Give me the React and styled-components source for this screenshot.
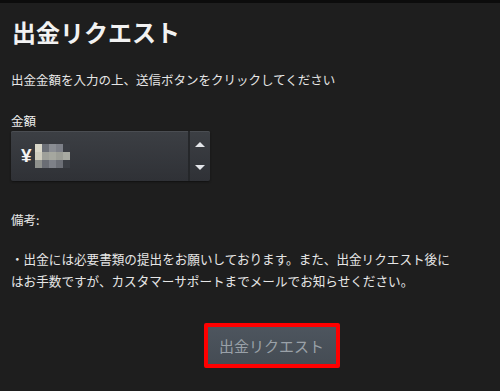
import React from "react";
import styled, { createGlobalStyle } from "styled-components";

const GlobalStyle = createGlobalStyle`
  html, body {
    margin: 0;
    padding: 0;
    background: #1e1e1e;
  }
  body {
    font-family: "Noto Sans CJK JP", "Noto Sans", sans-serif;
    color: #e8e8e8;
  }
`;

const Page = styled.div`
  width: 500px;
  height: 391px;
  background: #1e1e1e;
  border-top: 3px solid #0c0c0c;
  box-sizing: border-box;
  overflow: hidden;
`;

const Content = styled.div`
  padding: 0 10px 0 11px;
  display: flex;
  flex-direction: column;
`;

const Title = styled.h1`
  margin: 11px 0 0 1px;
  font-size: 24px;
  font-weight: 700;
  line-height: 36px;
  color: #f2f2f2;
`;

const Lead = styled.p`
  margin: 21px 0 0;
  font-size: 12.5px;
  line-height: 18px;
  color: #e6e6e6;
`;

const Label = styled.div`
  margin-top: 23px;
  font-size: 12.5px;
  line-height: 18px;
  color: #eeeeee;
`;

const AmountBox = styled.div`
  margin-top: 1px;
  width: 199px;
  height: 50px;
  display: flex;
  border-radius: 2px;
  background: linear-gradient(#3c3f44, #2f3136);
  box-shadow: inset 0 1px 0 #4a4d52, 0 1px 2px #111;
`;

const AmountField = styled.div`
  flex: 1;
  display: flex;
  align-items: center;
  padding-left: 10px;
  font-family: "Liberation Sans", sans-serif;
  font-size: 19px;
  font-weight: 700;
  color: #f4f4f4;
  border-right: 2px solid #25272a;
`;

const Mosaic = styled.div`
  display: grid;
  grid-template-columns: repeat(5, 7px);
  grid-template-rows: repeat(3, 8px);
  margin-left: 3px;
`;

const Cell = styled.span`
  background: ${(p) => p.$c};
`;

const Spinner = styled.div`
  width: 20px;
  display: flex;
  flex-direction: column;
  justify-content: space-between;
  align-items: center;
  padding: 11px 0;
`;

const Arrow = styled.span`
  width: 0;
  height: 0;
  border-left: 5px solid transparent;
  border-right: 5px solid transparent;
  ${(p) =>
    p.$up
      ? "border-bottom: 5px solid #e4e6ea;"
      : "border-top: 5px solid #e4e6ea;"}
`;

const Notes = styled.div`
  margin-top: 28px;
  font-size: 12.5px;
  line-height: 22px;
  color: #e6e6e6;
`;

const NoteText = styled.p`
  margin: 17px 0 0;
  font-size: 12.6px;
  line-height: 22px;
  color: #e6e6e6;
`;

const Actions = styled.div`
  display: flex;
  justify-content: center;
  margin-top: 31px;
  padding-left: 42px;
`;

const SubmitButton = styled.button`
  width: 136px;
  height: 45px;
  box-sizing: border-box;
  border: 4px solid #ff0000;
  border-radius: 2px;
  background: linear-gradient(#4d555e, #454c54);
  color: #9aa1a8;
  font-family: "Noto Sans CJK JP", sans-serif;
  font-size: 15px;
  cursor: pointer;
`;

const mosaic = [
  "#d9d7c9", "#6b6f77", "#8a8d93", "#7d8088", "#3a3d43",
  "#cfcdbf", "#9ea09a", "#a5a79f", "#9b9d96", "#a8aaa2",
  "#8f918d", "#6a6d74", "#7e8188", "#6c6f76", "#3b3e44",
];

export default function App() {
  return (
    <>
      <GlobalStyle />
      <Page>
        <Content>
          <Title>出金リクエスト</Title>
          <Lead>出金金額を入力の上、送信ボタンをクリックしてください</Lead>
          <Label>金額</Label>
          <AmountBox>
            <AmountField>
              ¥
              <Mosaic>
                {mosaic.map((c, i) => (
                  <Cell key={i} $c={c} />
                ))}
              </Mosaic>
            </AmountField>
            <Spinner>
              <Arrow $up />
              <Arrow />
            </Spinner>
          </AmountBox>
          <Notes>備考:</Notes>
          <NoteText>
            ・出金には必要書類の提出をお願いしております。また、出金リクエスト後に
            <br />
            はお手数ですが、カスタマーサポートまでメールでお知らせください。
          </NoteText>
          <Actions>
            <SubmitButton>出金リクエスト</SubmitButton>
          </Actions>
        </Content>
      </Page>
    </>
  );
}
